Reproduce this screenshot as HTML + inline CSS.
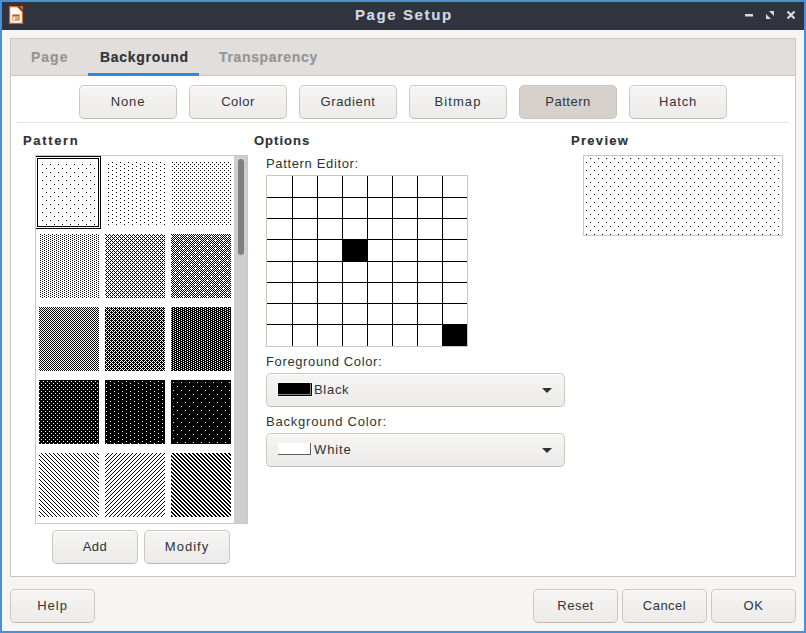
<!DOCTYPE html>
<html><head><meta charset="utf-8">
<style>
*{margin:0;padding:0;box-sizing:border-box}
html,body{width:806px;height:633px;overflow:hidden;background:#4a90d9}
body{position:relative;font-family:"Liberation Sans",sans-serif;color:#2e3436}
.a{position:absolute}
.t{position:absolute;white-space:nowrap;font-size:13px;line-height:13px;letter-spacing:0.5px}
.b{font-weight:bold;letter-spacing:1px;-webkit-text-stroke:0.15px currentColor}
.btn{position:absolute;height:34px;border:1px solid #cdc7c2;border-bottom-color:#bfb8b1;border-radius:5px;background:linear-gradient(to bottom,#f6f5f4,#edebe9);box-shadow:inset 0 1px rgba(255,255,255,0.8);font-size:13px;letter-spacing:0.5px;text-align:center;line-height:32px;white-space:nowrap}
.btn.on{background:#d6d1cd;border-color:#c9c3be;box-shadow:none}
svg{position:absolute;left:0;top:0}
</style></head><body>
<div class="a" style="left:2px;top:2px;width:802px;height:629px;background:#f6f5f4"></div>
<div class="a" style="left:2px;top:2px;width:802px;height:28px;background:#2f343f"></div>
<div class="t b" style="left:355px;top:7px;font-size:15px;line-height:15px;letter-spacing:1.6px;color:#d3dae3">Page Setup</div>
<svg width="806" height="40" style="top:0">
<path d="M9.6 6.6h7.6l5.3 5.3v11.5h-12.9z" fill="#fff" stroke="#d4621f" stroke-width="1.3"/>
<path d="M18.8 6h4.2v4.2z" fill="#e0661a"/>
<rect x="12" y="14" width="8" height="7" rx="1.5" fill="#dea07c"/>
<rect x="12.5" y="15" width="7" height="1" fill="#c8581a"/>
<rect x="13" y="17" width="2" height="3" fill="#f7e6dc"/>
<rect x="745" y="14" width="8" height="2.5" fill="#d3dae3"/>
<path d="M769 11h5v5z M766 14v5h5z" fill="#d3dae3"/>
<path d="M787.5 11.5l7 7M794.5 11.5l-7 7" stroke="#d3dae3" stroke-width="2.2"/>
</svg>
<!-- notebook -->
<div class="a" style="left:10px;top:38px;width:786px;height:539px;border:1px solid #cdc7c2;background:#fff"></div>
<div class="a" style="left:11px;top:39px;width:784px;height:37px;background:#e1dedb;border-bottom:1px solid #cdc7c2"></div>
<div class="a" style="left:88px;top:73px;width:111px;height:3px;background:#3584e4"></div>
<div class="t b" style="left:31px;top:50px;font-size:14px;line-height:14px;color:#929595">Page</div>
<div class="t b" style="left:100px;top:50px;font-size:14px;line-height:14px;letter-spacing:0.7px">Background</div>
<div class="t b" style="left:219px;top:50px;font-size:14px;line-height:14px;letter-spacing:0.65px;color:#929595">Transparency</div>
<!-- type buttons -->
<div class="btn" style="left:79px;top:85px;width:98px;letter-spacing:0.9px">None</div>
<div class="btn" style="left:189px;top:85px;width:98px">Color</div>
<div class="btn" style="left:299px;top:85px;width:98px;letter-spacing:0.65px">Gradient</div>
<div class="btn" style="left:409px;top:85px;width:98px;letter-spacing:1.1px">Bitmap</div>
<div class="btn on" style="left:519px;top:85px;width:98px">Pattern</div>
<div class="btn" style="left:629px;top:85px;width:98px;letter-spacing:0.8px">Hatch</div>
<div class="a" style="left:17px;top:122px;width:772px;height:1px;background:#e3e3e3"></div>
<div class="t b" style="left:23px;top:134px;letter-spacing:1.65px">Pattern</div>
<div class="t b" style="left:254px;top:134px">Options</div>
<div class="t b" style="left:571px;top:134px;letter-spacing:1.3px">Preview</div>
<div class="t" style="left:266px;top:157px;letter-spacing:0.65px">Pattern Editor:</div>
<div class="t" style="left:266px;top:355px;letter-spacing:0.63px">Foreground Color:</div>
<div class="t" style="left:266px;top:415px;letter-spacing:0.78px">Background Color:</div>
<!-- list box -->
<div class="a" style="left:35px;top:155px;width:213px;height:369px;border:1px solid #cdc7c2;background:#fff"></div>
<div class="a" style="left:234px;top:156px;width:13px;height:367px;background:#cecece"></div>
<div class="a" style="left:238px;top:159px;width:6px;height:96px;background:#7e8182;border-radius:3px"></div>
<svg width="806" height="633" shape-rendering="crispEdges">
<defs>
<pattern id="p5" patternUnits="userSpaceOnUse" x="39" y="161" width="8" height="8"><path d="M3 3h1v1h-1zM7 7h1v1h-1z"/></pattern>
<pattern id="p10" patternUnits="userSpaceOnUse" x="105" y="161" width="8" height="8"><path d="M7 1h1v1h-1zM3 3h1v1h-1zM7 5h1v1h-1zM3 7h1v1h-1z"/></pattern>
<pattern id="p20" patternUnits="userSpaceOnUse" x="171" y="161" width="8" height="8"><path d="M1 1h1v1h-1zM5 1h1v1h-1zM3 3h1v1h-1zM7 3h1v1h-1zM1 5h1v1h-1zM5 5h1v1h-1zM3 7h1v1h-1zM7 7h1v1h-1z"/></pattern>
<pattern id="p25" patternUnits="userSpaceOnUse" x="39" y="234" width="8" height="8"><path d="M1 0h1v1h-1zM5 0h1v1h-1zM3 1h1v1h-1zM7 1h1v1h-1zM1 2h1v1h-1zM5 2h1v1h-1zM3 3h1v1h-1zM7 3h1v1h-1zM1 4h1v1h-1zM5 4h1v1h-1zM3 5h1v1h-1zM7 5h1v1h-1zM1 6h1v1h-1zM5 6h1v1h-1zM3 7h1v1h-1zM7 7h1v1h-1z"/></pattern>
<pattern id="p30" patternUnits="userSpaceOnUse" x="105" y="234" width="8" height="8"><path d="M0 0h1v1h-1zM4 0h1v1h-1zM1 1h1v1h-1zM3 1h1v1h-1zM5 1h1v1h-1zM7 1h1v1h-1zM2 2h1v1h-1zM6 2h1v1h-1zM1 3h1v1h-1zM3 3h1v1h-1zM5 3h1v1h-1zM7 3h1v1h-1zM0 4h1v1h-1zM4 4h1v1h-1zM1 5h1v1h-1zM3 5h1v1h-1zM5 5h1v1h-1zM7 5h1v1h-1zM2 6h1v1h-1zM6 6h1v1h-1zM1 7h1v1h-1zM3 7h1v1h-1zM5 7h1v1h-1zM7 7h1v1h-1z"/></pattern>
<pattern id="p40" patternUnits="userSpaceOnUse" x="171" y="234" width="8" height="8"><path d="M0 0h1v1h-1zM2 0h1v1h-1zM4 0h1v1h-1zM6 0h1v1h-1zM1 1h1v1h-1zM3 1h1v1h-1zM5 1h1v1h-1zM7 1h1v1h-1zM2 2h1v1h-1zM4 2h1v1h-1zM6 2h1v1h-1zM1 3h1v1h-1zM3 3h1v1h-1zM5 3h1v1h-1zM7 3h1v1h-1zM0 4h1v1h-1zM2 4h1v1h-1zM4 4h1v1h-1zM6 4h1v1h-1zM1 5h1v1h-1zM3 5h1v1h-1zM5 5h1v1h-1zM7 5h1v1h-1zM0 6h1v1h-1zM2 6h1v1h-1zM6 6h1v1h-1zM1 7h1v1h-1zM3 7h1v1h-1zM5 7h1v1h-1zM7 7h1v1h-1z"/></pattern>
<pattern id="p50" patternUnits="userSpaceOnUse" x="39" y="307" width="8" height="8"><path d="M0 0h1v1h-1zM2 0h1v1h-1zM4 0h1v1h-1zM6 0h1v1h-1zM1 1h1v1h-1zM3 1h1v1h-1zM5 1h1v1h-1zM7 1h1v1h-1zM0 2h1v1h-1zM2 2h1v1h-1zM4 2h1v1h-1zM6 2h1v1h-1zM1 3h1v1h-1zM3 3h1v1h-1zM5 3h1v1h-1zM7 3h1v1h-1zM0 4h1v1h-1zM2 4h1v1h-1zM4 4h1v1h-1zM6 4h1v1h-1zM1 5h1v1h-1zM3 5h1v1h-1zM5 5h1v1h-1zM7 5h1v1h-1zM0 6h1v1h-1zM2 6h1v1h-1zM4 6h1v1h-1zM6 6h1v1h-1zM1 7h1v1h-1zM3 7h1v1h-1zM5 7h1v1h-1zM7 7h1v1h-1z"/></pattern>
<pattern id="p60" patternUnits="userSpaceOnUse" x="105" y="307" width="8" height="8"><path d="M0 0h1v1h-1zM2 0h1v1h-1zM4 0h1v1h-1zM6 0h1v1h-1zM1 1h3v1h-3zM5 1h3v1h-3zM0 2h1v1h-1zM2 2h1v1h-1zM4 2h1v1h-1zM6 2h1v1h-1zM0 3h2v1h-2zM3 3h3v1h-3zM7 3h1v1h-1zM0 4h1v1h-1zM2 4h1v1h-1zM4 4h1v1h-1zM6 4h1v1h-1zM1 5h3v1h-3zM5 5h3v1h-3zM0 6h1v1h-1zM2 6h1v1h-1zM4 6h1v1h-1zM6 6h1v1h-1zM0 7h2v1h-2zM3 7h3v1h-3zM7 7h1v1h-1z"/></pattern>
<pattern id="p70" patternUnits="userSpaceOnUse" x="171" y="307" width="8" height="8"><path d="M1 0h3v1h-3zM5 0h3v1h-3zM0 1h2v1h-2zM3 1h3v1h-3zM7 1h1v1h-1zM1 2h3v1h-3zM5 2h3v1h-3zM0 3h2v1h-2zM3 3h3v1h-3zM7 3h1v1h-1zM1 4h3v1h-3zM5 4h3v1h-3zM0 5h2v1h-2zM3 5h3v1h-3zM7 5h1v1h-1zM1 6h3v1h-3zM5 6h3v1h-3zM0 7h2v1h-2zM3 7h3v1h-3zM7 7h1v1h-1z"/></pattern>
<pattern id="p75" patternUnits="userSpaceOnUse" x="39" y="380" width="8" height="8"><path d="M0 0h8v1h-8zM1 1h3v1h-3zM5 1h3v1h-3zM0 2h8v1h-8zM0 3h2v1h-2zM3 3h3v1h-3zM7 3h1v1h-1zM0 4h8v1h-8zM1 5h3v1h-3zM5 5h3v1h-3zM0 6h8v1h-8zM0 7h2v1h-2zM3 7h3v1h-3zM7 7h1v1h-1z"/></pattern>
<pattern id="p80" patternUnits="userSpaceOnUse" x="105" y="380" width="8" height="8"><path d="M0 0h8v1h-8zM0 1h5v1h-5zM6 1h2v1h-2zM0 2h8v1h-8zM0 3h1v1h-1zM2 3h6v1h-6zM0 4h8v1h-8zM0 5h5v1h-5zM6 5h2v1h-2zM0 6h8v1h-8zM0 7h1v1h-1zM2 7h6v1h-6z"/></pattern>
<pattern id="p90" patternUnits="userSpaceOnUse" x="171" y="380" width="8" height="8"><path d="M0 0h8v1h-8zM0 1h8v1h-8zM0 2h2v1h-2zM3 2h5v1h-5zM0 3h8v1h-8zM0 4h8v1h-8zM0 5h8v1h-8zM0 6h6v1h-6zM7 6h1v1h-1zM0 7h8v1h-8z"/></pattern>
<pattern id="pldd" patternUnits="userSpaceOnUse" x="39" y="453" width="8" height="8"><path d="M2 0h1v1h-1zM6 0h1v1h-1zM3 1h1v1h-1zM7 1h1v1h-1zM0 2h1v1h-1zM4 2h1v1h-1zM1 3h1v1h-1zM5 3h1v1h-1zM2 4h1v1h-1zM6 4h1v1h-1zM3 5h1v1h-1zM7 5h1v1h-1zM0 6h1v1h-1zM4 6h1v1h-1zM1 7h1v1h-1zM5 7h1v1h-1z"/></pattern>
<pattern id="plud" patternUnits="userSpaceOnUse" x="105" y="453" width="8" height="8"><path d="M3 0h1v1h-1zM7 0h1v1h-1zM2 1h1v1h-1zM6 1h1v1h-1zM1 2h1v1h-1zM5 2h1v1h-1zM0 3h1v1h-1zM4 3h1v1h-1zM3 4h1v1h-1zM7 4h1v1h-1zM2 5h1v1h-1zM6 5h1v1h-1zM1 6h1v1h-1zM5 6h1v1h-1zM0 7h1v1h-1zM4 7h1v1h-1z"/></pattern>
<pattern id="pddd" patternUnits="userSpaceOnUse" x="171" y="453" width="8" height="8"><path d="M1 0h2v1h-2zM5 0h2v1h-2zM2 1h2v1h-2zM6 1h2v1h-2zM0 2h1v1h-1zM3 2h2v1h-2zM7 2h1v1h-1zM0 3h2v1h-2zM4 3h2v1h-2zM1 4h2v1h-2zM5 4h2v1h-2zM2 5h2v1h-2zM6 5h2v1h-2zM0 6h1v1h-1zM3 6h2v1h-2zM7 6h1v1h-1zM0 7h2v1h-2zM4 7h2v1h-2z"/></pattern>
<pattern id="prev" patternUnits="userSpaceOnUse" x="587" y="155" width="8" height="8"><path d="M3 3h1v1h-1zM7 7h1v1h-1z"/></pattern>
</defs>
<rect x="39" y="161" width="60" height="64" fill="url(#p5)"/>
<rect x="105" y="161" width="60" height="64" fill="url(#p10)"/>
<rect x="171" y="161" width="60" height="64" fill="url(#p20)"/>
<rect x="39" y="234" width="60" height="64" fill="url(#p25)"/>
<rect x="105" y="234" width="60" height="64" fill="url(#p30)"/>
<rect x="171" y="234" width="60" height="64" fill="url(#p40)"/>
<rect x="39" y="307" width="60" height="64" fill="url(#p50)"/>
<rect x="105" y="307" width="60" height="64" fill="url(#p60)"/>
<rect x="171" y="307" width="60" height="64" fill="url(#p70)"/>
<rect x="39" y="380" width="60" height="64" fill="url(#p75)"/>
<rect x="105" y="380" width="60" height="64" fill="url(#p80)"/>
<rect x="171" y="380" width="60" height="64" fill="url(#p90)"/>
<rect x="39" y="453" width="60" height="64" fill="url(#pldd)"/>
<rect x="105" y="453" width="60" height="64" fill="url(#plud)"/>
<rect x="171" y="453" width="60" height="64" fill="url(#pddd)"/>
<rect x="35.5" y="156.5" width="65" height="72" fill="none" stroke="#000"/>
<rect x="37.5" y="158.5" width="61" height="68" fill="none" stroke="#000"/>
<rect x="35" y="155" width="1" height="369" fill="#cdc7c2"/>
<!-- preview -->
<rect x="583.5" y="155.5" width="199" height="80" fill="#fff" stroke="#cdc7c2"/>
<rect x="584" y="156" width="198" height="79" fill="url(#prev)"/>
<!-- grid -->
<rect x="266.5" y="175.5" width="201" height="171" fill="#fff" stroke="#cdc7c2"/>
<g fill="#000"><rect x="292" y="176" width="1" height="170"/><rect x="317" y="176" width="1" height="170"/><rect x="342" y="176" width="1" height="170"/><rect x="367" y="176" width="1" height="170"/><rect x="392" y="176" width="1" height="170"/><rect x="417" y="176" width="1" height="170"/><rect x="442" y="176" width="1" height="170"/><rect x="267" y="197" width="200" height="1"/><rect x="267" y="218" width="200" height="1"/><rect x="267" y="239" width="200" height="1"/><rect x="267" y="261" width="200" height="1"/><rect x="267" y="282" width="200" height="1"/><rect x="267" y="303" width="200" height="1"/><rect x="267" y="324" width="200" height="1"/>
<rect x="342" y="239" width="26" height="23"/>
<rect x="442" y="324" width="25" height="22"/>
</g>
</svg>
<!-- buttons bottom of list -->
<div class="btn" style="left:52px;top:530px;width:86px">Add</div>
<div class="btn" style="left:144px;top:530px;width:86px;letter-spacing:1px">Modify</div>
<!-- dropdowns -->
<div class="btn" style="left:266px;top:373px;width:299px;height:34px"></div>
<div class="btn" style="left:266px;top:433px;width:299px;height:34px"></div>
<svg width="806" height="633" shape-rendering="crispEdges">
<rect x="277" y="382" width="36" height="15" fill="#fff" fill-opacity="0.6"/>
<rect x="278" y="383" width="34" height="13" fill="#000"/>
<rect x="310" y="383" width="1" height="12" fill="#8a8a8a"/>
<rect x="278" y="394" width="33" height="1" fill="#8a8a8a"/>
<rect x="278" y="443" width="33" height="12" fill="#fff"/>
<rect x="310" y="443" width="1" height="12" fill="#606060"/>
<rect x="278" y="454" width="33" height="1" fill="#606060"/>
</svg>
<svg width="806" height="633">
<path d="M542 388h10l-5 5z" fill="#2e3436"/>
<path d="M542 448h10l-5 5z" fill="#2e3436"/>
</svg>
<div class="t" style="left:314px;top:383px;letter-spacing:0.7px">Black</div>
<div class="t" style="left:314px;top:443px;letter-spacing:0.9px">White</div>
<!-- dialog buttons -->
<div class="btn" style="left:10px;top:589px;width:85px;letter-spacing:1px">Help</div>
<div class="btn" style="left:533px;top:589px;width:85px">Reset</div>
<div class="btn" style="left:622px;top:589px;width:85px">Cancel</div>
<div class="btn" style="left:711px;top:589px;width:85px">OK</div>
</body></html>
